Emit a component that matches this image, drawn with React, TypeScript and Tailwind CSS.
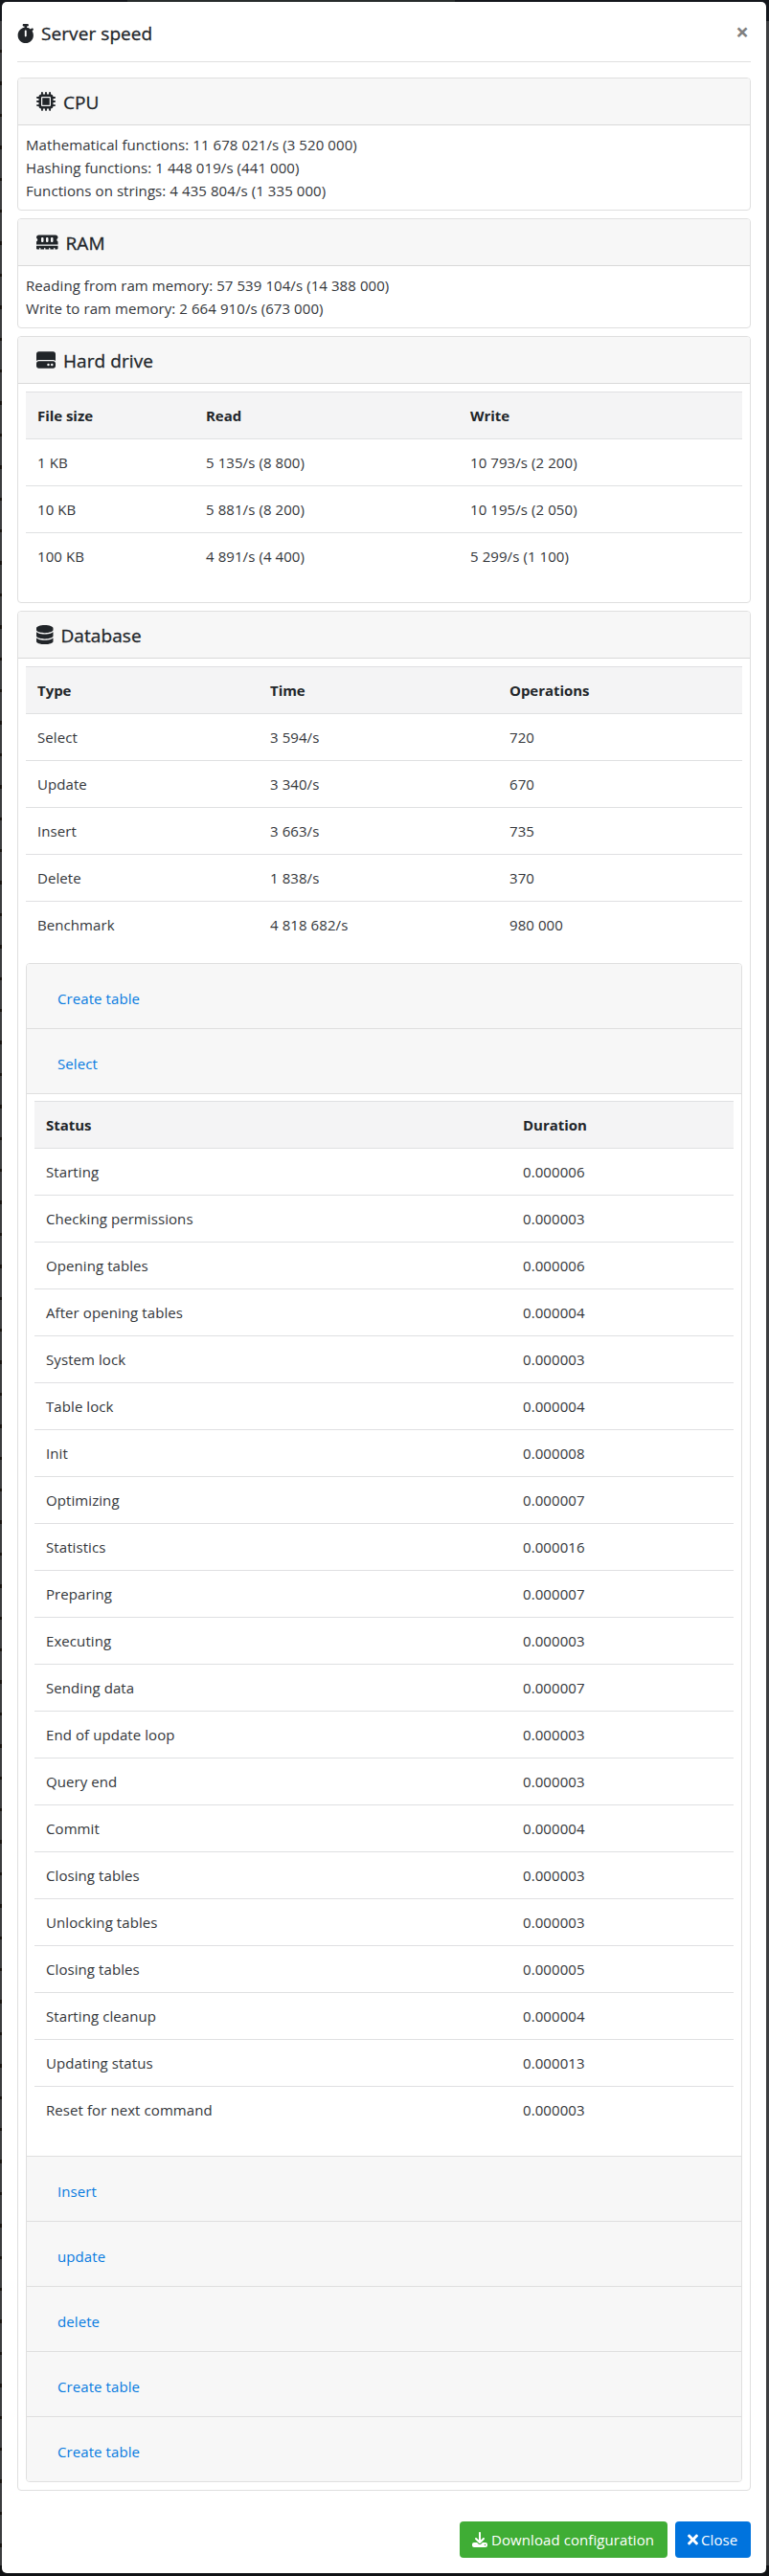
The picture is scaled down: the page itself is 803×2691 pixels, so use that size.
import type { ReactNode } from "react";
import { FaDatabase, FaDownload, FaHardDrive, FaMemory, FaMicrochip, FaStopwatch } from "react-icons/fa6";
import { FaTimes } from "react-icons/fa";

const driveRows = [
  ["1 KB", "5 135/s (8 800)", "10 793/s (2 200)"],
  ["10 KB", "5 881/s (8 200)", "10 195/s (2 050)"],
  ["100 KB", "4 891/s (4 400)", "5 299/s (1 100)"],
];

const databaseRows = [
  ["Select", "3 594/s", "720"],
  ["Update", "3 340/s", "670"],
  ["Insert", "3 663/s", "735"],
  ["Delete", "1 838/s", "370"],
  ["Benchmark", "4 818 682/s", "980 000"],
];

const profileRows = [
  ["Starting", "0.000006"],
  ["Checking permissions", "0.000003"],
  ["Opening tables", "0.000006"],
  ["After opening tables", "0.000004"],
  ["System lock", "0.000003"],
  ["Table lock", "0.000004"],
  ["Init", "0.000008"],
  ["Optimizing", "0.000007"],
  ["Statistics", "0.000016"],
  ["Preparing", "0.000007"],
  ["Executing", "0.000003"],
  ["Sending data", "0.000007"],
  ["End of update loop", "0.000003"],
  ["Query end", "0.000003"],
  ["Commit", "0.000004"],
  ["Closing tables", "0.000003"],
  ["Unlocking tables", "0.000003"],
  ["Closing tables", "0.000005"],
  ["Starting cleanup", "0.000004"],
  ["Updating status", "0.000013"],
  ["Reset for next command", "0.000003"],
];

function Card({ icon, title, children }: { icon: ReactNode; title: string; children: ReactNode }) {
  return (
    <section className="mb-2 rounded-[4px] border border-[#dfdfdf] bg-white">
      <h5 className="flex h-[49px] items-center gap-2 rounded-t-[3px] border-b border-[#d9d9d9] bg-[#f7f7f7] pl-[19px] text-[19px] leading-6 text-[#212529]">
        {icon}
        <span className="pt-0.5 [-webkit-text-stroke:0.3px_#212529]">{title}</span>
      </h5>
      <div className="p-2">{children}</div>
    </section>
  );
}

function DataTable({ head, rows, widths }: { head: string[]; rows: string[][]; widths: string[] }) {
  return (
    <table className="mb-4 w-full table-fixed border-separate border-spacing-0 text-left">
      <thead>
        <tr className="h-[49px] bg-[#f4f4f5] text-[#212529]">
          {head.map((label, i) => (
            <th key={label} className={`${widths[i]} border-t border-[#dfe0e2] px-3 py-0 font-bold tracking-[-0.04px]`}>
              {label}
            </th>
          ))}
        </tr>
      </thead>
      <tbody>
        {rows.map((row, r) => (
          <tr key={r} className="h-[49px]">
            {row.map((cell, i) => (
              <td key={i} className="border-t border-[#dfe0e2] px-3 py-0">
                {cell}
              </td>
            ))}
          </tr>
        ))}
      </tbody>
    </table>
  );
}

function AccordionHeader({ label }: { label: string }) {
  return (
    <div className="h-[68px] border-b border-[#dfdfdf] bg-[#f7f7f7] pt-6 pl-8 last:h-[67px] last:border-b-0">
      <a className="text-[#087be0]">{label}</a>
    </div>
  );
}

export default function App() {
  return (
    <div className="flex min-h-[2691px] w-[803px] flex-col bg-[linear-gradient(#14171c_0,#14171c_22px,#3c3d3f_22px,#3c3d3f_2680px,#101214_2680px)] font-['Open_Sans',sans-serif] text-[15px] leading-6 tracking-[0.08px] text-[#33363a]">
      <div className="ml-[133px] h-0.5 w-[342px] bg-[#272c2c]" />
      <div className="flex">
        <div className="mt-5 w-0.5 shrink-0 bg-[repeating-linear-gradient(transparent_0,transparent_30px,#17130f_30px,#17130f_33.4px)]" />
        <main className="h-[2686px] w-[798px] shrink-0 rounded-[5px] bg-white px-4">
          <header className="mb-4 flex h-[63px] items-start justify-between border-b border-[#dfdfdf] pt-5">
            <h4 className="flex items-center gap-[7.5px] text-[19px] leading-6 text-[#212529]">
              <FaStopwatch className="h-5 w-[17.5px]" />
              <span className="pt-px [-webkit-text-stroke:0.3px_#212529]">Server speed</span>
            </h4>
            <button className="mr-[2px] -mt-px text-[24px] leading-6 font-bold text-[#808080]">×</button>
          </header>

          <Card icon={<FaMicrochip className="h-5 w-5" />} title="CPU">
            <p>Mathematical functions: 11 678 021/s (3 520 000)</p>
            <p>Hashing functions: 1 448 019/s (441 000)</p>
            <p>Functions on strings: 4 435 804/s (1 335 000)</p>
          </Card>

          <Card icon={<FaMemory className="h-5 w-[22.5px]" />} title="RAM">
            <p>Reading from ram memory: 57 539 104/s (14 388 000)</p>
            <p>Write to ram memory: 2 664 910/s (673 000)</p>
          </Card>

          <Card icon={<FaHardDrive className="h-5 w-5" />} title="Hard drive">
            <DataTable head={["File size", "Read", "Write"]} rows={driveRows} widths={["w-[176px]", "w-[276px]", "w-[296px]"]} />
          </Card>

          <Card icon={<FaDatabase className="h-5 w-[17.5px]" />} title="Database">
            <DataTable head={["Type", "Time", "Operations"]} rows={databaseRows} widths={["w-[243px]", "w-[250px]", "w-[255px]"]} />
            <div className="overflow-hidden rounded-[4px] border border-[#dfdfdf]">
              <AccordionHeader label="Create table" />
              <AccordionHeader label="Select" />
              <div className="border-b border-[#dfdfdf] px-2 pt-[7px] pb-2">
                <DataTable head={["Status", "Duration"]} rows={profileRows} widths={["w-[498px]", "w-[232px]"]} />
              </div>
              <AccordionHeader label="Insert" />
              <AccordionHeader label="update" />
              <AccordionHeader label="delete" />
              <AccordionHeader label="Create table" />
              <AccordionHeader label="Create table" />
            </div>
          </Card>

          <footer className="mt-8 flex justify-end gap-2 text-white">
            <button className="flex h-[38px] w-[217px] items-center gap-1 rounded-[4px] bg-[#3fad35] pl-[13px] whitespace-nowrap">
              <FaDownload className="h-4 w-4" />
              <span>Download configuration</span>
            </button>
            <button className="flex h-[38px] w-[79px] items-center gap-[3px] rounded-[4px] bg-[#0073dd] pl-[13px]">
              <FaTimes className="h-4 w-[11px]" />
              <span>Close</span>
            </button>
          </footer>
        </main>
      </div>
    </div>
  );
}
